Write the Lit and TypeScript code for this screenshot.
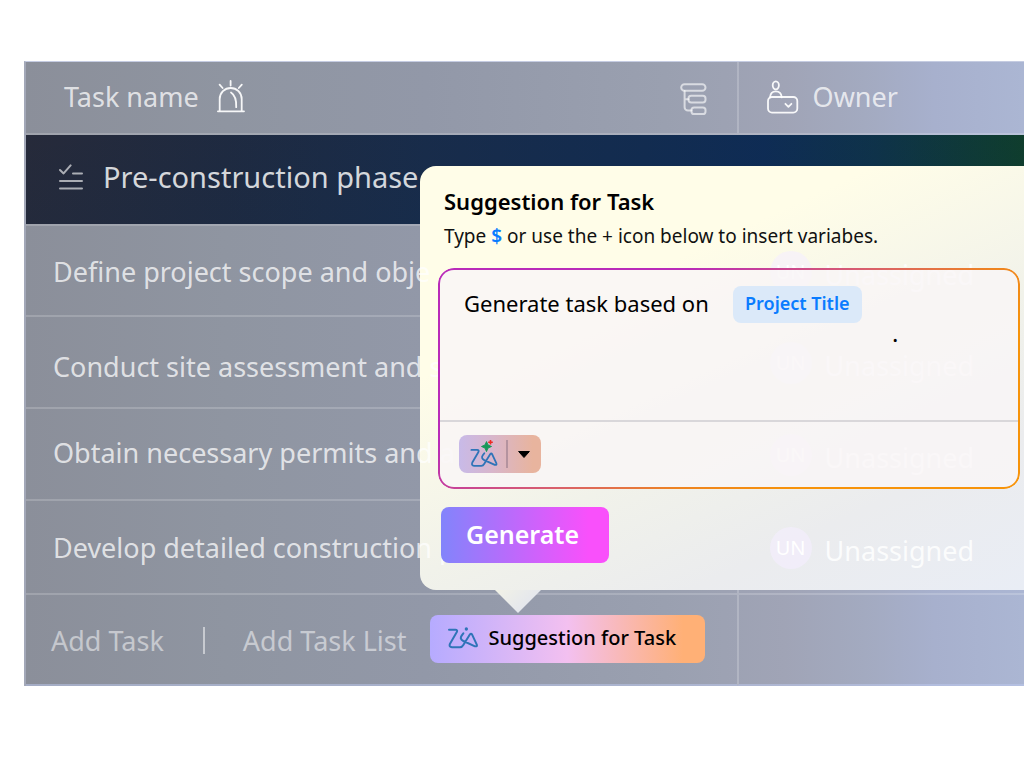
import { LitElement, html, css, svg } from "lit";
import { customElement, property, state } from "lit/decorators.js";

interface Task {
  name: string;
  height: string;
  align?: string;
}

const TASKS: Task[] = [
  { name: "Define project scope and obje", height: "h91" },
  { name: "Conduct site assessment and s", height: "h92", align: "low" },
  { name: "Obtain necessary permits and a", height: "h92", align: "high" },
  { name: "Develop detailed construction p", height: "h94" },
];

const sirenIcon = svg`<svg class="icon bright" width="28" height="33" viewBox="0 0 28 33" aria-hidden="true">
  <path stroke-width="1.8" d="M0.9 31.3H27M2.7 31V19a11 11 0 0 1 22 0V31M14 12.4c4 2.6 5.6 7.5 5.2 14.8M13.6 1v4.6M2.6 4.6l3 3.4M24.8 4.6l-3 3.4"/>
</svg>`;

const treeIcon = svg`<svg class="icon tree" width="27" height="32" viewBox="0 0 27 32" aria-hidden="true">
  <g stroke-width="2">
    <rect x="1.2" y="1.2" width="24.3" height="6.6" rx="3.3"/>
    <rect x="8.5" y="12.8" width="17" height="6.6" rx="2.6"/>
    <rect x="11.5" y="24.4" width="14" height="6.6" rx="2.6"/>
    <path d="M4.6 8v16.2a3.4 3.4 0 0 0 3.4 3.4h3.5M4.6 16.2h3.9"/>
  </g>
</svg>`;

const ownerIcon = svg`<svg class="icon bright" width="32" height="34" viewBox="0 0 32 34" aria-hidden="true">
  <g stroke-width="1.8">
    <ellipse cx="8.8" cy="5.3" rx="3.1" ry="4"/>
    <path d="M3 17.4c.3-4 2.6-6 5.8-6s5.6 2 6 6"/>
    <rect x="1" y="17" width="29.3" height="15.6" rx="4"/>
    <path d="M18.4 23.8l3 3 3-3"/>
  </g>
</svg>`;

const checklistIcon = svg`<svg class="icon" width="24" height="26" viewBox="0 0 24 26" aria-hidden="true">
  <path stroke-width="2" d="M1 6l3.6 3.4L11.6 1.4M14 9.4h9M1 17h22M1 24.6h22"/>
</svg>`;

const caretIcon = svg`<svg width="12" height="7" viewBox="0 0 12 7" aria-hidden="true">
  <path d="M.6.5h10.8L6 6.5z" fill="#000" stroke="#000" stroke-linejoin="round"/>
</svg>`;

const ZIA_LINE =
  "M3 8H22Q30 8 26 16L6 50Q2 60 12 61H36Q42 61 46 54L66 22Q69 18 72 22L86 52Q89 59 81 58L46 42Q34 36 41 26L46 19";

@customElement("zia-mark")
class ZiaMark extends LitElement {
  @property({ type: Boolean }) sparkle = false;

  static styles = css`
    :host {
      display: flex;
    }
    .stroke {
      fill: none;
      stroke: #2f74b8;
      stroke-linecap: round;
      stroke-linejoin: round;
    }
  `;

  render() {
    return this.sparkle
      ? html`<svg width="28" height="28" viewBox="0 0 28 28" aria-hidden="true">
          <g class="stroke" transform="translate(0.5 7.5) scale(0.3)"><path stroke-width="6" d=${ZIA_LINE} /></g>
          <path d="M16.5 1.6L18 5l3.5 1.5L18 8l-1.5 3.6L15 8l-3.5-1.5L15 5z" fill="#16985a" stroke="#16985a" />
          <path d="M20.5 0v4.6M18.2 2.3h4.6" stroke="#ee2a24" stroke-width="1.6" />
        </svg>`
      : html`<svg width="30" height="22" viewBox="0 0 90 66" aria-hidden="true">
          <path class="stroke" stroke-width="6" d=${ZIA_LINE} />
          <circle cx="55" cy="6" r="5" fill="#2f74b8" />
        </svg>`;
  }
}

@customElement("task-grid")
class TaskGrid extends LitElement {
  static styles = css`
    :host {
      display: block;
      border-left: 2px solid #a3a8b8;
      border-top: 1px solid #c5cce2;
      background: linear-gradient(
        90deg,
        #8b8f9a 0%,
        #8f95a1 20%,
        #9298a8 40%,
        #9aa0b0 64%,
        #a0a4b6 76%,
        #a3aac0 84%,
        #a7b0cd 91%,
        #abb6d3 100%
      );
    }
    table {
      width: 100%;
      table-layout: fixed;
      border-collapse: separate;
      border-spacing: 0;
    }
    th,
    td {
      box-sizing: border-box;
      padding: 0 0 0 27px;
      border-bottom: 2px solid rgba(255, 255, 255, 0.18);
      text-align: left;
      font-weight: 400;
      font-size: 27px;
      line-height: 36px;
      color: rgba(255, 255, 255, 0.74);
      white-space: nowrap;
      vertical-align: middle;
    }
    .head {
      height: 73px;
    }
    .task {
      width: 71.2%;
      padding-left: 38px;
    }
    .owner {
      border-left: 2px solid rgba(255, 255, 255, 0.2);
    }
    .h91 {
      height: 91px;
    }
    .h92 {
      height: 92px;
    }
    .h94 {
      height: 94px;
    }
    .line {
      position: relative;
      z-index: 2;
      display: flex;
      align-items: center;
    }
    .head .line {
      padding-bottom: 2px;
    }
    .columns {
      gap: 18px;
    }
    .tree {
      margin: 4px 30px 0 auto;
    }
    .person {
      padding-left: 1px;
      gap: 14px;
    }
    .group td {
      padding-left: 33px;
      font-size: 29px;
      color: rgba(255, 255, 255, 0.82);
      background: linear-gradient(172deg, rgba(38, 42, 58, 0) 0%, rgba(10, 44, 80, 0.2) 100%),
        linear-gradient(90deg, #262a3a 0%, #1f2a40 20%, #192c4a 40%, #132c50 62%, #0f2c55 74%, #0f3349 85%, #104028 100%);
      background-clip: padding-box;
    }
    .group .line {
      z-index: 0;
      gap: 20px;
      padding-bottom: 6px;
    }
    .body .line {
      padding-top: 2px;
    }
    .high .line {
      padding-top: 0;
      padding-bottom: 2px;
    }
    .low .line {
      padding-top: 10px;
    }
    .body .owned {
      padding: 8px 0 0 4px;
      gap: 13px;
      color: rgba(255, 255, 255, 0.85);
    }
    .avatar {
      width: 42px;
      height: 42px;
      margin-top: -6px;
      border-radius: 50%;
      background: rgba(245, 238, 255, 0.6);
      color: #fff;
      font-size: 20px;
      line-height: 42px;
      text-align: center;
    }
    .foot td {
      padding-left: 25px;
      border-bottom-color: rgba(190, 202, 240, 0.5);
    }
    .foot .line {
      padding-bottom: 2px;
    }
    .add {
      padding: 4px 0 0;
      border: 0;
      background: none;
      font: inherit;
      color: rgba(255, 255, 255, 0.5);
    }
    .bar {
      width: 2px;
      height: 27px;
      margin: 4px 38px 0 39px;
      background: rgba(255, 255, 255, 0.5);
    }
    .suggest {
      display: flex;
      align-items: center;
      gap: 11px;
      height: 48px;
      margin-left: 23px;
      padding: 0 29px 2px 18px;
      border: 0;
      border-radius: 8px;
      background: linear-gradient(90deg, #b6abff 0%, #f3c0f0 50%, #ffb076 92%);
      font: 500 20px/28px "Noto Sans", sans-serif;
      color: #000;
    }
    .icon {
      fill: none;
      stroke: rgba(255, 255, 255, 0.62);
      stroke-linecap: round;
      stroke-linejoin: round;
    }
    .bright {
      stroke: rgba(255, 255, 255, 0.92);
    }
  `;

  render() {
    return html`
      <table>
        <thead>
          <tr>
            <th class="head task"><div class="line columns"><span>Task name</span>${sirenIcon}${treeIcon}</div></th>
            <th class="head owner"><div class="line person">${ownerIcon}<span>Owner</span></div></th>
          </tr>
        </thead>
        <tbody>
          <tr class="group">
            <td class="h91" colspan="2">
              <div class="line">${checklistIcon}<span>Pre-construction phase (1)</span></div>
            </td>
          </tr>
          ${TASKS.map(
            (task) => html`<tr class="body">
              <td class="${task.height} ${task.align ?? ""}"><div class="line">${task.name}</div></td>
              <td class="owner">
                <div class="line owned"><span class="avatar">UN</span><span>Unassigned</span></div>
              </td>
            </tr>`
          )}
          <tr class="foot">
            <td class="h91">
              <div class="line">
                <button class="add" type="button">Add Task</button>
                <span class="bar"></span>
                <button class="add" type="button">Add Task List</button>
                <button class="suggest" type="button"><zia-mark></zia-mark>Suggestion for Task</button>
              </div>
            </td>
            <td class="owner"></td>
          </tr>
        </tbody>
      </table>
    `;
  }
}

@customElement("suggestion-popover")
class SuggestionPopover extends LitElement {
  @state() private prompt = "Generate task based on";

  static styles = css`
    :host {
      display: block;
      box-sizing: border-box;
      padding: 20px 4px 27px 18px;
    }
    :host::before {
      content: "";
      position: absolute;
      z-index: 1;
      inset: 0;
      border-radius: 16px 0 0 16px;
      background: linear-gradient(155deg, #fffde8 0%, #fffde8 30%, #f1f2ea 58%, #ebecee 78%, #e9edf5 100%);
    }
    :host::after {
      content: "";
      position: absolute;
      z-index: 1;
      top: 100%;
      left: 75px;
      width: 46px;
      height: 23px;
      clip-path: polygon(0 0, 100% 0, 50% 100%);
      background: linear-gradient(135deg, #f2f2e6, #e2e5ee 80%);
    }
    .content {
      position: relative;
      z-index: 3;
    }
    h2 {
      margin: 0 0 0 6px;
      font-size: 22px;
      line-height: 30px;
      font-weight: 600;
      color: #000;
    }
    p {
      margin: 6px 0 0 6px;
      font-size: 19px;
      line-height: 28px;
      color: #111;
    }
    .dollar {
      color: #0a7cff;
      font-weight: 600;
    }
    .editor {
      position: relative;
      box-sizing: border-box;
      margin-top: 18px;
      padding: 2px;
      border-radius: 16px;
      background: rgba(249, 245, 246, 0.82);
    }
    .editor::before {
      content: "";
      position: absolute;
      inset: 0;
      padding: 2px;
      border-radius: 16px;
      background: linear-gradient(145deg, #b92bb9 0%, #b92bb9 28%, #d95f6c 48%, #ee8420 62%, #f7930a 75%);
      mask: linear-gradient(#000 0 0) content-box exclude, linear-gradient(#000 0 0);
      pointer-events: none;
    }
    .area {
      box-sizing: border-box;
      min-height: 152px;
      padding: 16px 24px 0;
      border-bottom: 2px solid #d9d7da;
    }
    .entry {
      display: flex;
      align-items: flex-start;
      gap: 13px;
    }
    input {
      width: 256px;
      height: 34px;
      padding: 0;
      border: 0;
      outline: 0;
      background: none;
      font: 400 22px/34px "Noto Sans", sans-serif;
      color: #000;
    }
    .chip {
      height: 37px;
      padding: 0 12px 3px;
      border: 0;
      border-radius: 8px;
      background: #dbe9f9;
      font: 600 18px/28px "Noto Sans", sans-serif;
      color: #0a7cff;
    }
    .dot {
      margin-left: 428px;
      font-size: 24px;
      line-height: 20px;
      color: #000;
    }
    .tools {
      padding: 13px 19px 14px;
    }
    .split {
      display: flex;
      align-items: center;
      width: 82px;
      height: 38px;
      border-radius: 8px;
      background: linear-gradient(90deg, #c8bae8 0%, #d8b6cc 40%, #e8b49e 90%);
    }
    .split button {
      display: flex;
      padding: 0;
      border: 0;
      background: none;
    }
    .split .zia {
      padding: 0 8px 0 11px;
      border-right: 2px solid #b4939f;
    }
    .split .more {
      padding: 10px;
    }
    .generate {
      height: 56px;
      margin: 18px 0 0 3px;
      padding: 0 30px 2px 25px;
      border: 0;
      border-radius: 8px;
      background: linear-gradient(90deg, #8284fb 0%, #bb6afb 42%, #f950fb 88%);
      font: 600 25px/34px "Noto Sans", sans-serif;
      color: #fff;
    }
  `;

  render() {
    return html`
      <div class="content">
        <h2>Suggestion for Task</h2>
        <p>Type <span class="dollar">$</span> or use the + icon below to insert variabes.</p>
        <div class="editor">
          <div class="area">
            <div class="entry">
              <input
                type="text"
                aria-label="Prompt"
                .value=${this.prompt}
                @input=${(e: Event) => (this.prompt = (e.target as HTMLInputElement).value)}
              />
              <button class="chip" type="button">Project Title</button>
            </div>
            <div class="dot">.</div>
          </div>
          <div class="tools">
            <div class="split">
              <button class="zia" type="button" aria-label="Zia"><zia-mark sparkle></zia-mark></button>
              <button class="more" type="button" aria-label="More">${caretIcon}</button>
            </div>
          </div>
        </div>
        <button class="generate" type="button">Generate</button>
      </div>
    `;
  }
}

@customElement("app-root")
class AppRoot extends LitElement {
  static styles = css`
    :host {
      display: block;
      box-sizing: border-box;
      min-height: 100vh;
      padding: 61px 0 40px 24px;
      background: #fff;
      font-family: "Noto Sans", sans-serif;
      overflow: hidden;
    }
    .board {
      position: relative;
    }
    suggestion-popover {
      position: absolute;
      top: 105px;
      left: 396px;
      right: 0;
    }
  `;

  render() {
    return html`<main class="board">
      <task-grid></task-grid>
      <suggestion-popover></suggestion-popover>
    </main>`;
  }
}
